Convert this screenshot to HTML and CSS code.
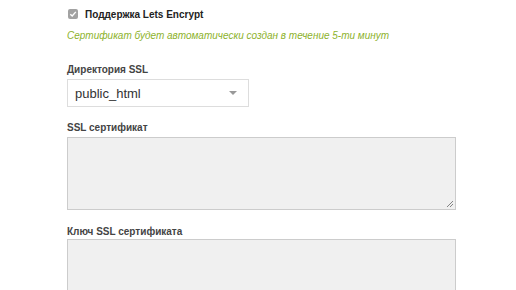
FILE: index.html
```html
<!DOCTYPE html>
<html lang="ru">
<head>
  <meta charset="UTF-8">
  <title>SSL</title>
  <link rel="stylesheet" href="styles.css">
</head>
<body>
  <div class="form">
    <div class="check-row">
      <span class="check-box">
        <svg width="10" height="10" viewBox="0 0 10 10"><path d="M2.3 5.2 L4.2 7 L7.8 2.9" fill="none" stroke="#fff" stroke-width="1.4"/></svg>
      </span>
      <span class="check-label">Поддержка Lets Encrypt</span>
    </div>
    <p class="hint">Сертификат будет автоматически создан в течение 5-ти минут</p>

    <div class="field field-dir">
      <label class="field-label">Директория SSL</label>
      <div class="select">
        <span>public_html</span>
        <span class="arrow"></span>
      </div>
    </div>

    <div class="field field-cert">
      <label class="field-label">SSL сертификат</label>
      <div class="area">
        <svg class="grip" width="8" height="8" viewBox="0 0 8 8"><path d="M7 1 L1 7 M7 4 L4 7" stroke="#777" stroke-width="0.9"/></svg>
      </div>
    </div>

    <div class="field field-key">
      <label class="field-label">Ключ SSL сертификата</label>
      <div class="area"></div>
    </div>
  </div>
</body>
</html>
```

FILE: styles.css
```css
body {
  margin: 0;
  background: #fff;
  font-family: "Liberation Sans", sans-serif;
  color: #333;
}
.form {
  padding: 8px 0 0 67px;
  width: 389px;
}
.check-row {
  display: flex;
  align-items: center;
  gap: 7px;
  height: 12px;
}
.check-box {
  display: flex;
  width: 10px;
  height: 10px;
  margin-left: 1px;
  background: #a2a2a2;
  border-radius: 2px;
}
.check-label {
  font-size: 10px;
  font-weight: bold;
  color: #222;
}
.hint {
  margin: 10px 0 0;
  font-size: 10px;
  font-style: italic;
  color: #8db22c;
}
.field-dir {
  margin-top: 23px;
}
.field-cert {
  margin-top: 15px;
}
.field-key {
  margin-top: 16px;
}
.field-label {
  display: block;
  font-size: 10px;
  font-weight: bold;
  color: #444;
  margin-bottom: 4px;
}
.field-key .field-label {
  margin-bottom: 2px;
}
.select {
  display: flex;
  align-items: center;
  justify-content: space-between;
  box-sizing: border-box;
  width: 182px;
  height: 28px;
  padding: 0 11px 0 7px;
  border: 1px solid #ddd;
  font-size: 13px;
  color: #333;
}
.arrow {
  width: 0;
  height: 0;
  border-left: 4px solid transparent;
  border-right: 4px solid transparent;
  border-top: 4px solid #999;
}
.area {
  position: relative;
  box-sizing: border-box;
  height: 73px;
  background: #f0f0f0;
  border: 1px solid #ccc;
}
.grip {
  position: absolute;
  right: 1px;
  bottom: 1px;
}
```
